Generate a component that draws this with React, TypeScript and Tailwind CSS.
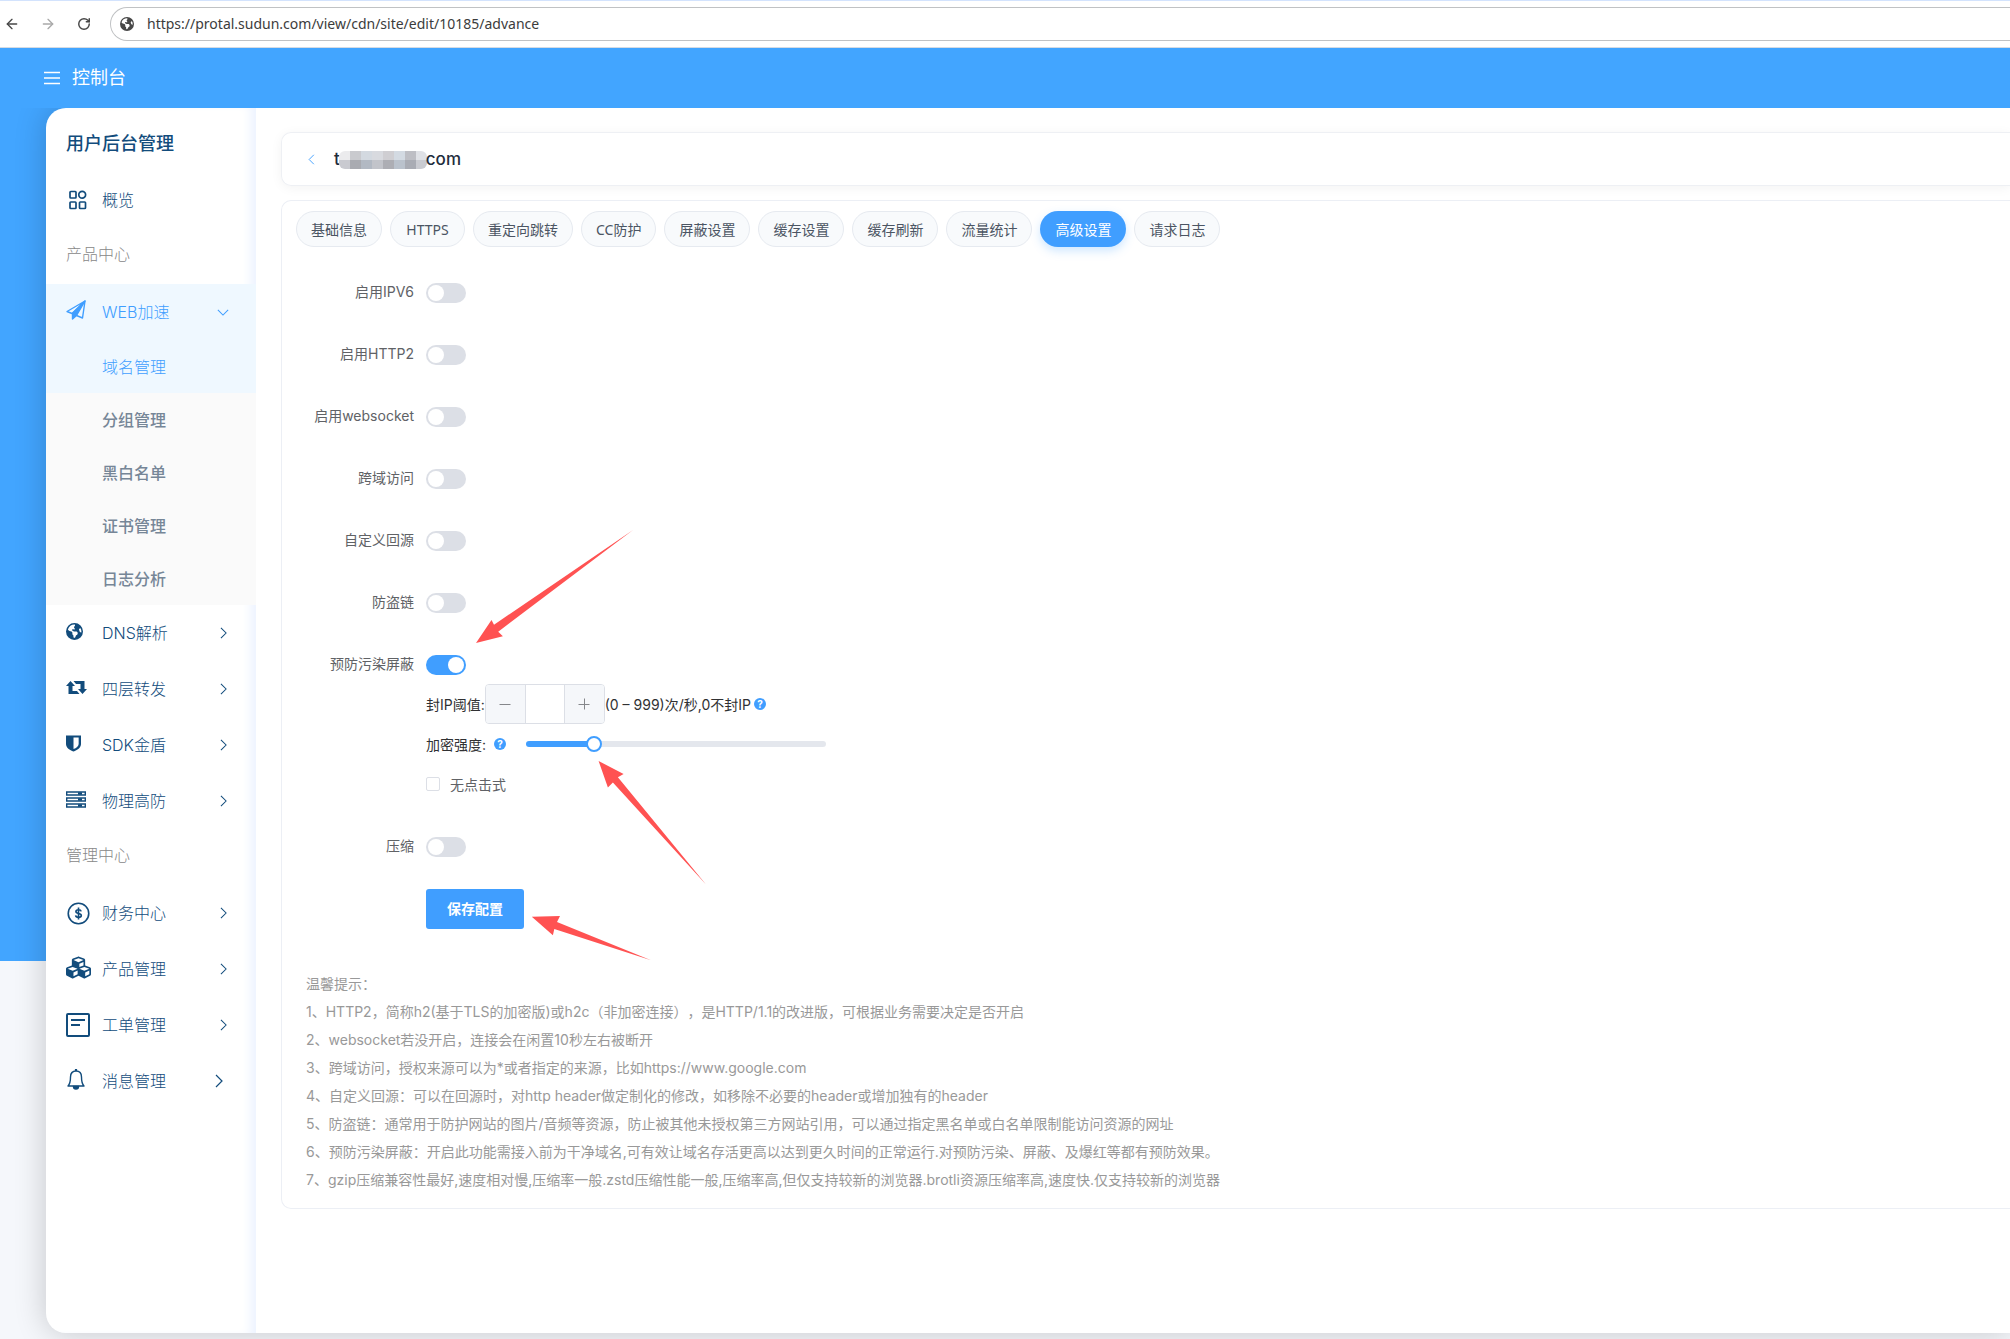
import { useState, type ReactNode } from "react";
import { ArrowLeft, ArrowRight, RotateCw } from "lucide-react";
import { FaEarthAmericas } from "react-icons/fa6";
import { FaCubes } from "react-icons/fa";

type IconProps = { className?: string };

function ChevronRight({ className }: IconProps) {
  return (
    <svg viewBox="0 0 8 14" className={className} fill="none" stroke="currentColor" strokeWidth="1.2">
      <path d="M1 1l6 6-6 6" />
    </svg>
  );
}

function ChevronDown({ className }: IconProps) {
  return (
    <svg viewBox="0 0 14 8" className={className} fill="none" stroke="currentColor" strokeWidth="1.2">
      <path d="M1 1l6 6 6-6" />
    </svg>
  );
}

function GridIcon() {
  return (
    <svg viewBox="0 0 18 20" className="ml-[3px] h-5 w-[18px]" fill="none" stroke="currentColor" strokeWidth="1.7">
      <rect x="1" y="1.5" width="6" height="6.5" rx="0.8" />
      <circle cx="13.2" cy="4.8" r="3.4" />
      <rect x="1" y="12" width="6" height="6.5" rx="0.8" />
      <rect x="10.5" y="12" width="6" height="6.5" rx="0.8" />
    </svg>
  );
}

function PlaneIcon() {
  return (
    <svg viewBox="0 0 20 20" className="h-5 w-5" fill="none" stroke="currentColor" strokeWidth="1.4" strokeLinejoin="round">
      <path d="M19 1L1 11.5l5 2L19 1l-2.500 17-6-2.500" />
      <path d="M19 1L6.500 13.500V19l4-3.500z" fill="currentColor" />
    </svg>
  );
}

function RetweetIcon() {
  return (
    <svg viewBox="0 0 21 13" className="h-[13px] w-[21px]" fill="currentColor">
      <path d="M4.500 0L9 5H6.500v5H11l2.500 3h-11V5H0z" />
      <path d="M7.500 0h11v8H21l-4.500 5L12 8h2.500V3H10z" />
    </svg>
  );
}

function ShieldIcon() {
  return (
    <svg viewBox="0 0 16 18" className="h-[18px] w-[15px]" fill="currentColor">
      <path fillRule="evenodd" d="M0 1h16v9c0 4-4 6.500-8 8-4-1.500-8-4-8-8zM8 3v12.500c3-1.300 5.500-3 5.500-5.500V3z" />
    </svg>
  );
}

function CoinIcon() {
  return (
    <svg viewBox="0 0 24 24" className="ml-px h-[23px] w-[23px]" fill="none" stroke="currentColor" strokeWidth="1.7">
      <circle cx="12" cy="12" r="10.700" />
      <path d="M14.800 9.800c-.3-1.100-1.300-1.700-2.800-1.700s-2.700.7-2.700 1.800c0 2.800 5.600 1.500 5.600 4.200 0 1.200-1.300 1.900-2.900 1.900s-2.800-.7-3-2M12 5.800v12.500" />
    </svg>
  );
}

function TicketIcon() {
  return (
    <svg viewBox="0 0 24 24" className="h-6 w-6" fill="none" stroke="currentColor" strokeWidth="2">
      <rect x="1" y="1" width="22" height="22" rx="1" />
      <path d="M5 7h14M5 12h9" />
    </svg>
  );
}

function BellIcon() {
  return (
    <svg viewBox="0 0 20 22" className="h-[22px] w-5" fill="none" stroke="currentColor" strokeWidth="1.4">
      <path d="M2 18c2-2 2.500-4 2.500-9C4.500 5 7 3 10 3s5.500 2 5.500 6c0 5 .5 7 2.500 9z" strokeLinejoin="round" />
      <path d="M10 1v2" strokeWidth="2.200" />
      <path d="M7.500 18.500a2.500 2.500 0 0 0 5 0z" fill="currentColor" />
    </svg>
  );
}

function ServerIcon() {
  return (
    <svg viewBox="0 0 20 17" className="h-[17px] w-5" fill="none" stroke="currentColor" strokeWidth="1.400">
      <path d="M.7 1h18.600v3H.7zM.7 7h18.600v3H.7zM.7 13h18.600v3H.7z" />
      <path d="M12 2.500h4M12 8.500h4M12 14.500h4" strokeWidth="2.500" />
    </svg>
  );
}

function HelpIcon() {
  return (
    <span className="flex h-3 w-3 items-center justify-center rounded-full bg-[#409eff] text-[10px] font-bold leading-3 text-white">
      ?
    </span>
  );
}

function NavItem({ icon, label, raised, last }: { icon: ReactNode; label: string; raised?: boolean; last?: boolean }) {
  return (
    <a href="#" className="flex h-14 items-center pl-5 pr-[29px]">
      <span className={raised ? "flex w-9 items-center pb-1" : "flex w-9 items-center"}>{icon}</span>
      <span className="flex-1">{label}</span>
      <ChevronRight className={last ? "mr-1 h-[14px] w-2" : "h-3 w-[7px]"} />
    </a>
  );
}

function Toggle({ id, on }: { id: string; on?: boolean }) {
  const [checked, setChecked] = useState(Boolean(on));
  return (
    <input
      id={id}
      type="checkbox"
      role="switch"
      checked={checked}
      onChange={() => setChecked(!checked)}
      className="h-5 w-10 cursor-pointer appearance-none rounded-full bg-[#dcdfe6] p-[2px] before:block before:h-4 before:w-4 before:rounded-full before:bg-white checked:bg-[#409eff] checked:before:ml-5"
    />
  );
}

function FormRow({ id, label, on, children }: { id: string; label: string; on?: boolean; children?: ReactNode }) {
  return (
    <div className="mb-[22px] flex">
      <label htmlFor={id} className="w-[130px] pr-3 text-right leading-[38px] text-[#606266]">
        {label}
      </label>
      <div className="relative">
        <div className="flex h-10 items-center">
          <Toggle id={id} on={on} />
        </div>
        {children}
      </div>
    </div>
  );
}

const tabs = ["基础信息", "HTTPS", "重定向跳转", "CC防护", "屏蔽设置", "缓存设置", "缓存刷新", "流量统计", "高级设置", "请求日志"];

const subItems = ["分组管理", "黑白名单", "证书管理", "日志分析"];

const hints = [
  "温馨提示：",
  "1、HTTP2，简称h2(基于TLS的加密版)或h2c（非加密连接），是HTTP/1.1的改进版，可根据业务需要决定是否开启",
  "2、websocket若没开启，连接会在闲置10秒左右被断开",
  "3、跨域访问，授权来源可以为*或者指定的来源，比如https://www.google.com",
  "4、自定义回源：可以在回源时，对http header做定制化的修改，如移除不必要的header或增加独有的header",
  "5、防盗链：通常用于防护网站的图片/音频等资源，防止被其他未授权第三方网站引用，可以通过指定黑名单或白名单限制能访问资源的网址",
  "6、预防污染屏蔽：开启此功能需接入前为干净域名,可有效让域名存活更高以达到更久时间的正常运行.对预防污染、屏蔽、及爆红等都有预防效果。",
  "7、gzip压缩兼容性最好,速度相对慢,压缩率一般.zstd压缩性能一般,压缩率高,但仅支持较新的浏览器.brotli资源压缩率高,速度快.仅支持较新的浏览器",
];

const mosaic = [
  ["bg-[#ebebed]", "bg-[#c9cace]", "bg-[#d3d9e0]", "bg-[#d8dadf]", "bg-[#cfced2]", "bg-[#d3dae2]", "bg-[#bdbec4]", "bg-[#dfe1e6]"],
  ["bg-[#c9cad0]", "bg-[#a9abb1]", "bg-[#b2b9c3]", "bg-[#c2c4ca]", "bg-[#adaeb4]", "bg-[#bac2cc]", "bg-[#a9acb4]", "bg-[#c9cbd1]"],
];

function BrowserBar() {
  return (
    <div className="flex h-12 items-center border-b border-[#d5dbe3] bg-white text-[#474747] shadow-[inset_0_1px_0_#d3e3fd]">
      <div className="flex items-center gap-4 pl-0.5 pr-4">
        <button aria-label="后退" className="flex w-5 justify-center">
          <ArrowLeft className="h-4 w-4" />
        </button>
        <button aria-label="前进" className="flex w-5 justify-center text-[#a9a9a9]">
          <ArrowRight className="h-4 w-4" />
        </button>
        <button aria-label="重新加载" className="flex w-5 justify-center">
          <RotateCw className="h-[14px] w-[14px]" strokeWidth={2.5} />
        </button>
      </div>
      <div className="flex h-[34px] flex-1 items-center gap-[13px] rounded-l-full border border-r-0 border-[#c0c2c4] pl-[9px]">
        <FaEarthAmericas className="h-[14px] w-[14px]" />
        <input
          aria-label="地址"
          defaultValue="https://protal.sudun.com/view/cdn/site/edit/10185/advance"
          className="flex-1 bg-transparent font-['Noto_Sans',sans-serif] text-[14px] text-[#3c3c3c] outline-none"
        />
      </div>
    </div>
  );
}

function Sidebar() {
  return (
    <nav className="w-[210px] shrink-0 rounded-l-[20px] text-base font-light text-[#124c7c] shadow-[inset_-10px_0_10px_-4px_#eef4ff]">
      <h1 className="h-16 pl-5 pt-2 text-lg font-medium leading-14">用户后台管理</h1>
      <a href="#" className="flex h-14 items-center pl-5">
        <span className="flex w-9">
          <GridIcon />
        </span>
        概览
      </a>
      <p className="h-14 pl-5 leading-[53px] text-[#888]">产品中心</p>
      <div className="bg-[#eff8ff] text-[#409eff]">
        <a href="#" className="flex h-14 items-center pl-5 pr-[27px]">
          <span className="flex w-9 pb-1">
            <PlaneIcon />
          </span>
          <span className="flex-1">WEB加速</span>
          <ChevronDown className="h-[7px] w-3" />
        </a>
        <a href="#" className="block h-[53px] pl-14 leading-[55px]">
          域名管理
        </a>
      </div>
      <div className="bg-[#fafafa] font-medium text-[#768697]">
        {subItems.map((s) => (
          <a key={s} href="#" className="block h-[53px] pl-14 leading-[55px]">
            {s}
          </a>
        ))}
      </div>
      <NavItem raised icon={<FaEarthAmericas className="h-[17px] w-[17px]" />} label="DNS解析" />
      <NavItem raised icon={<RetweetIcon />} label="四层转发" />
      <NavItem raised icon={<ShieldIcon />} label="SDK金盾" />
      <NavItem raised icon={<ServerIcon />} label="物理高防" />
      <p className="h-14 pl-5 leading-[53px] text-[#888]">管理中心</p>
      <NavItem icon={<CoinIcon />} label="财务中心" />
      <NavItem raised icon={<FaCubes className="h-[25px] w-[25px]" />} label="产品管理" />
      <NavItem icon={<TicketIcon />} label="工单管理" />
      <NavItem raised icon={<BellIcon />} label="消息管理" last />
    </nav>
  );
}

function AntiPollution() {
  const [level, setLevel] = useState(21);
  return (
    <div className="-mt-px mb-px">
      <svg viewBox="0 0 157 113" className="pointer-events-none absolute -top-[115px] left-[50px] h-[113px] w-[157px]" fill="#ff5252">
        <path d="M0 113L15.500 90l2.500 4.700L157 0 22.200 101.700l4.700 4.600z" />
      </svg>
      <div className="flex h-10 items-center">
        <label htmlFor="limit">封IP阈值:</label>
        <div className="flex h-10 w-[120px] overflow-hidden rounded border border-[#dcdfe6] text-[#85878b]">
          <button type="button" aria-label="减少" className="flex w-10 items-center justify-center border-r border-[#dcdfe6] bg-[#f5f7fa]">
            <svg viewBox="0 0 12 12" className="h-3 w-3" stroke="currentColor">
              <path d="M.5 6.500h11" />
            </svg>
          </button>
          <input id="limit" type="text" className="w-0 flex-1 text-center outline-none" />
          <button type="button" aria-label="增加" className="flex w-10 items-center justify-center border-l border-[#dcdfe6] bg-[#f5f7fa]">
            <svg viewBox="0 0 12 12" className="h-3 w-3" stroke="currentColor">
              <path d="M.5 6.500h11M6.500 .5v11" />
            </svg>
          </button>
        </div>
        <span className="mr-[3px] whitespace-nowrap">(0 – 999)次/秒,0不封IP</span>
        <HelpIcon />
      </div>
      <div className="relative flex h-10 items-center">
        <label htmlFor="level" className="mr-2">
          加密强度:
        </label>
        <HelpIcon />
        <input
          id="level"
          type="range"
          min={0}
          max={100}
          value={level}
          onChange={(e) => setLevel(Number(e.target.value))}
          style={{ backgroundImage: `linear-gradient(to right, #409eff ${level}%, #e4e7ed ${level}%)` }}
          className="ml-5 h-1.5 w-[300px] appearance-none rounded-full [&::-webkit-slider-thumb]:h-4 [&::-webkit-slider-thumb]:w-4 [&::-webkit-slider-thumb]:appearance-none [&::-webkit-slider-thumb]:rounded-full [&::-webkit-slider-thumb]:border-2 [&::-webkit-slider-thumb]:border-[#409eff] [&::-webkit-slider-thumb]:bg-white"
        />
        <svg viewBox="0 0 108 124" className="pointer-events-none absolute left-[172px] top-[37px] h-[124px] w-[108px]" fill="#ff5252">
          <path d="M.6 0l25 13-5.700 3.300L108 123.500 14.900 21.600l-5 5z" />
        </svg>
      </div>
      <label className="flex h-10 items-center gap-2.5 text-[#606266]">
        <input type="checkbox" className="h-[14px] w-[14px] appearance-none rounded-[2px] border border-[#dcdfe6] bg-white checked:bg-[#409eff]" />
        无点击式
      </label>
    </div>
  );
}

export default function App() {
  return (
    <div className="flex min-h-screen flex-col overflow-hidden bg-[#f5f7fb] bg-[linear-gradient(#42a5ff,#42a5ff)] bg-[length:100%_961px] bg-no-repeat font-['Inter','Noto_Sans_CJK_SC',sans-serif] text-[14px] text-[#303133] [text-spacing-trim:space-all]">
      <BrowserBar />
      <header className="relative z-10 flex h-[60px] items-center gap-3 bg-[#42a5ff] pl-11 text-lg text-white">
        <button aria-label="菜单">
          <svg viewBox="0 0 16 14" className="h-[14px] w-4" stroke="currentColor" strokeWidth="1.400">
            <path d="M0 1.500h16M0 7h16M0 12.500h16" />
          </svg>
        </button>
        <span>控制台</span>
      </header>
      <div className="mb-1.5 ml-[46px] flex flex-1 rounded-l-[20px] bg-white shadow-[0_0_32px_rgba(0,0,0,0.2)]">
        <Sidebar />
        <main className="min-w-0 flex-1 pl-[25px] pt-6">
          <section className="flex h-[54px] items-center rounded-l-[10px] border border-r-0 border-[#eef0f4] pl-[26px] pt-0.5 shadow-[0_2px_12px_rgba(0,0,0,0.05)]">
            <button aria-label="返回" className="pb-0.5 text-[#409eff]">
              <ChevronRight className="h-[11px] w-[7px] rotate-180" />
            </button>
            <h2 className="ml-[19px] flex items-center text-[17px] font-medium text-[#1f2d3d]">
              t
              <span className="-mx-px grid grid-cols-8 overflow-hidden rounded-md">
                {mosaic.flat().map((c, i) => (
                  <span key={i} className={`h-[9px] w-[11px] ${c}`} />
                ))}
              </span>
              com
            </h2>
          </section>
          <section className="mt-[14px] rounded-l-[10px] border border-r-0 border-[#eceff5] pb-[14px] pl-[14px] pt-2.5">
            <div className="flex gap-2 font-['Noto_Sans','Noto_Sans_CJK_SC',sans-serif]">
              {tabs.map((t) => (
                <button
                  key={t}
                  className={
                    t === "高级设置"
                      ? "h-9 rounded-full bg-[#409eff] px-[15px] text-white shadow-[0_4px_10px_rgba(64,158,255,0.25)]"
                      : "h-9 min-w-[75px] rounded-full border border-[#e6eaf0] bg-[#f8fafc] px-[14px] text-[#4b5563]"
                  }
                >
                  {t}
                </button>
              ))}
            </div>
            <form className="mt-[26px]" onSubmit={(e) => e.preventDefault()}>
              <FormRow id="ipv6" label="启用IPV6" />
              <FormRow id="http2" label="启用HTTP2" />
              <FormRow id="ws" label="启用websocket" />
              <FormRow id="cors" label="跨域访问" />
              <FormRow id="origin" label="自定义回源" />
              <FormRow id="leech" label="防盗链" />
              <FormRow id="pollution" label="预防污染屏蔽" on>
                <AntiPollution />
              </FormRow>
              <FormRow id="gzip" label="压缩" />
              <div className="relative ml-[130px] w-[98px]">
                <button type="submit" className="h-10 w-full rounded-[3px] bg-[#409eff] pb-0.5 font-bold text-white">
                  保存配置
                </button>
                <svg viewBox="0 0 120 46" className="pointer-events-none absolute left-[105px] top-[26px] h-[46px] w-[120px]" fill="#ff5252">
                  <path d="M.8 1.700L29 1l-3 6 94 38.300L23.300 14l-1.400 6.300z" />
                </svg>
              </div>
            </form>
            <div className="ml-2.5 mt-[41px] text-[#999]">
              {hints.map((h) => (
                <p key={h} className="leading-7">
                  {h}
                </p>
              ))}
            </div>
          </section>
        </main>
      </div>
    </div>
  );
}
